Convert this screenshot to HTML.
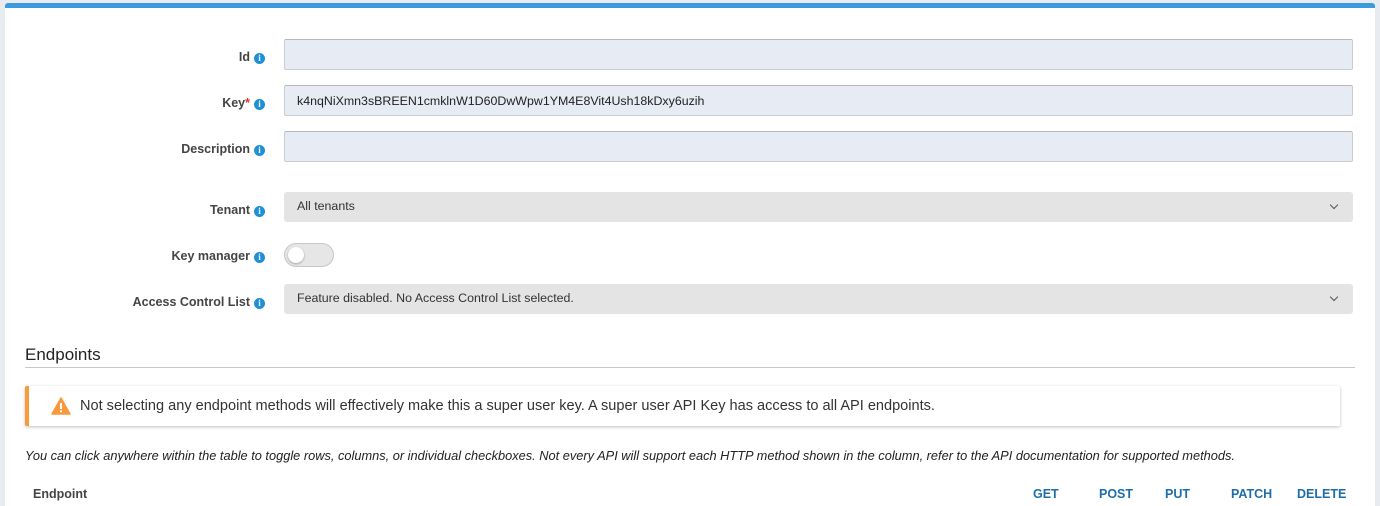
<!DOCTYPE html>
<html style="overflow:hidden"><head><style>
html,body{margin:0;width:1380px;height:506px;overflow:hidden}
body{background:#e8ebf0;font-family:"Liberation Sans",Arial,sans-serif;position:relative;color:#333}
.panel{position:absolute;left:5px;top:3px;width:1370px;height:503px;background:#fff;border-top:5px solid #3b99de;box-sizing:border-box;border-radius:3px 3px 0 0}
.lbl{position:absolute;right:1115px;font-size:12.5px;font-weight:bold;color:#444;white-space:nowrap}
.lbl i{display:inline-block;width:11px;height:11px;border-radius:50%;background:#1f8fd6;color:#fff;font-style:normal;font-size:9px;line-height:11px;text-align:center;font-family:"Liberation Serif",serif;font-weight:bold;vertical-align:0px;margin-left:4px}
.in{position:absolute;left:284px;width:1069px;height:31px;box-sizing:border-box;background:#e7ebf3;border:1px solid #c9ccd2;border-top-color:#b5b8bd;border-radius:2px;font-size:12.4px;color:#222;padding:8px 12px}
.sel{position:absolute;left:284px;width:1069px;height:30px;box-sizing:border-box;background:#e4e4e4;border-radius:3px;font-size:12.4px;color:#333;padding:7px 13px}
.sel:after{content:"";position:absolute;right:16px;top:10px;width:5px;height:5px;border-right:1.3px solid #555;border-bottom:1.3px solid #555;transform:rotate(45deg)}
.red{color:#d33}
.m{position:absolute;top:487px;font-size:12.5px;font-weight:bold;color:#1d6ea8}
</style></head><body>
<div class="panel"></div>
<div class="lbl" style="top:50px">Id<i>i</i></div>
<div class="in" style="top:39px"></div>
<div class="lbl" style="top:96px">Key<span class="red">*</span><i>i</i></div>
<div class="in" style="top:85px">k4nqNiXmn3sBREEN1cmklnW1D60DwWpw1YM4E8Vit4Ush18kDxy6uzih</div>
<div class="lbl" style="top:142px">Description<i>i</i></div>
<div class="in" style="top:131px"></div>
<div class="lbl" style="top:203px">Tenant<i>i</i></div>
<div class="sel" style="top:192px">All tenants</div>
<div class="lbl" style="top:249px">Key manager<i>i</i></div>
<div style="position:absolute;left:284px;top:243px;width:50px;height:24px;box-sizing:border-box;border:1px solid #c8c8c8;border-radius:12px;background:#e6e6e6"><div style="position:absolute;left:3px;top:3px;width:16px;height:16px;border-radius:50%;background:#fff;box-shadow:0 1px 2px rgba(0,0,0,.3)"></div></div>
<div class="lbl" style="top:295px">Access Control List<i>i</i></div>
<div class="sel" style="top:284px">Feature disabled. No Access Control List selected.</div>
<div style="position:absolute;left:25px;top:345px;font-size:17px;color:#222">Endpoints</div>
<div style="position:absolute;left:25px;top:367px;width:1330px;height:1px;background:#c8c8c8"></div>
<div style="position:absolute;left:25px;top:386px;width:1315px;height:40px;box-sizing:border-box;background:#fff;border-left:4px solid #f99a3c;box-shadow:0 1px 3px rgba(0,0,0,.25);border-radius:2px">
<svg style="position:absolute;left:22px;top:11px" width="20" height="18" viewBox="0 0 20 18"><path d="M10 1 L19 17 L1 17 Z" fill="#f7993c" stroke="#f7993c" stroke-linejoin="round" stroke-width="1.5"/><rect x="9" y="6" width="2" height="6" fill="#fff"/><rect x="9" y="13.3" width="2" height="2" fill="#fff"/></svg>
<div style="position:absolute;left:51px;top:12px;font-size:14.55px;color:#333;white-space:nowrap">Not selecting any endpoint methods will effectively make this a super user key. A super user API Key has access to all API endpoints.</div></div>
<div style="position:absolute;left:25px;top:448px;font-size:12.8px;font-style:italic;color:#222;white-space:nowrap">You can click anywhere within the table to toggle rows, columns, or individual checkboxes. Not every API will support each HTTP method shown in the column, refer to the API documentation for supported methods.</div>
<div style="position:absolute;top:487px;left:33px;font-size:12.5px;font-weight:bold;color:#444">Endpoint</div>
<div class="m" style="left:1033px">GET</div>
<div class="m" style="left:1099px">POST</div>
<div class="m" style="left:1165px">PUT</div>
<div class="m" style="left:1231px">PATCH</div>
<div class="m" style="left:1297px">DELETE</div>
</body></html>
